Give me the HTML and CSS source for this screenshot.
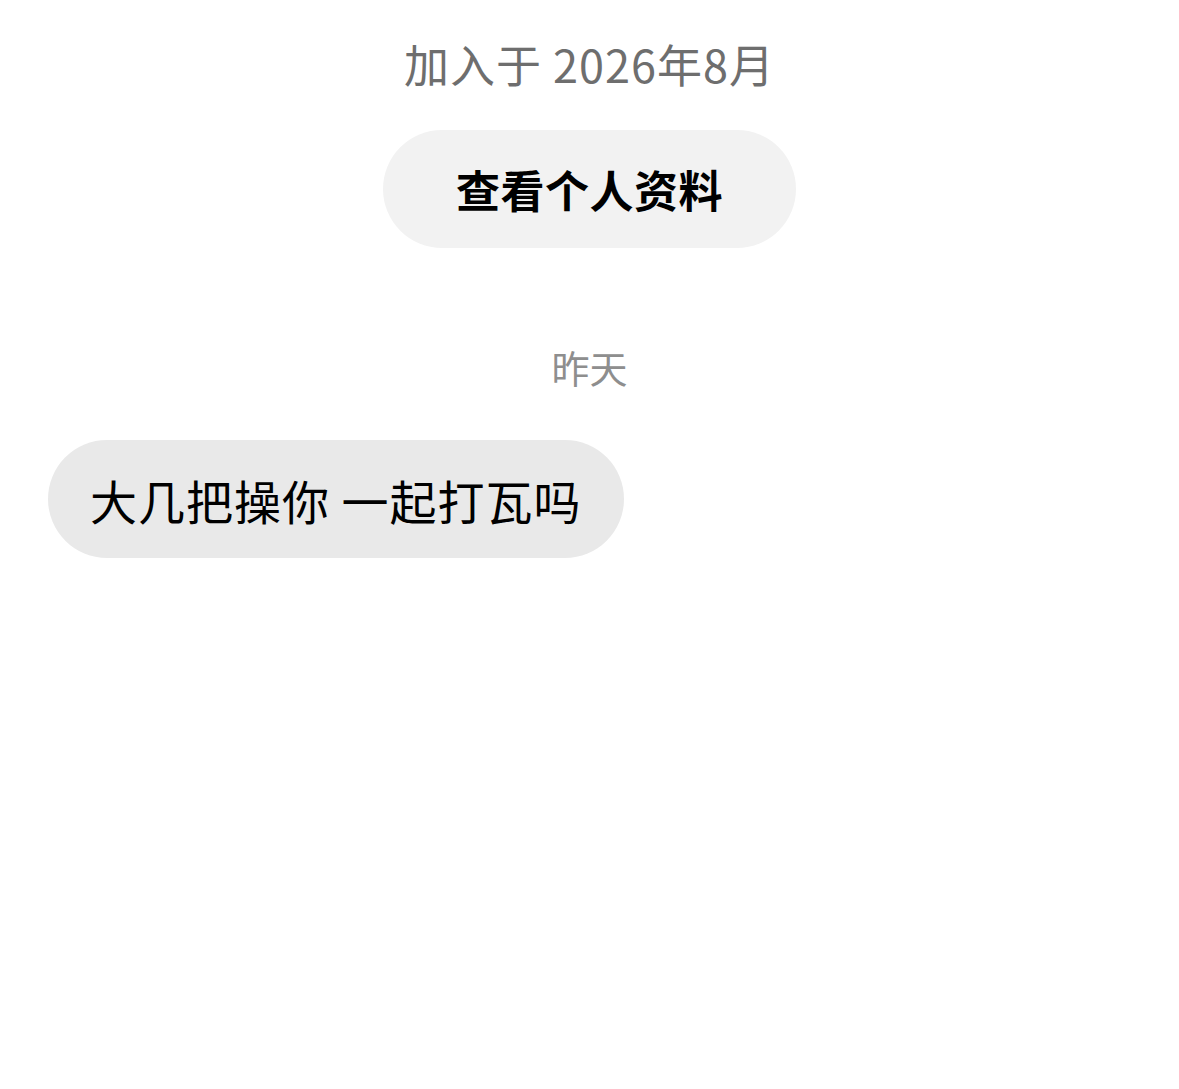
FILE: index.html
```html
<!DOCTYPE html>
<html lang="zh-CN">
<head>
<meta charset="utf-8" />
<link rel="stylesheet" href="styles.css">
<title>聊天</title>
</head>
<body>
<div class="chat">
    <div class="profile">
        <p class="joined">加入于 2026年8月</p>
        <a class="btn-profile" href="javascript:void(0)">查看个人资料</a>
    </div>
    <p class="day">昨天</p>
    <div class="row">
        <div class="bubble">大几把操你 一起打瓦吗</div>
    </div>
</div>
</body>
</html>
```

FILE: styles.css
```css
body,div,p{margin:0;padding:0;}
body{background:#fff;font-family:"Noto Sans CJK SC","Noto Sans",sans-serif;color:#000;}
a{text-decoration:none;color:#000;}
.chat{display:flex;flex-direction:column;padding:37px 48px 0;}
.profile{display:flex;flex-direction:column;align-items:center;}
.joined{font-size:45px;line-height:54px;letter-spacing:1px;color:#6e6e6e;}
.btn-profile{display:flex;align-items:center;justify-content:center;margin-top:39px;width:413px;height:118px;border-radius:59px;background:#f2f2f2;font-size:44px;font-weight:700;letter-spacing:0.5px;}
.day{margin-top:96px;text-align:center;font-size:38px;line-height:46px;color:#8e8e8e;}
.row{display:flex;margin-top:50px;}
.bubble{display:flex;align-items:center;height:118px;padding:0 42px;border-radius:59px;background:#e9e9e9;font-size:47px;letter-spacing:1px;}
```
